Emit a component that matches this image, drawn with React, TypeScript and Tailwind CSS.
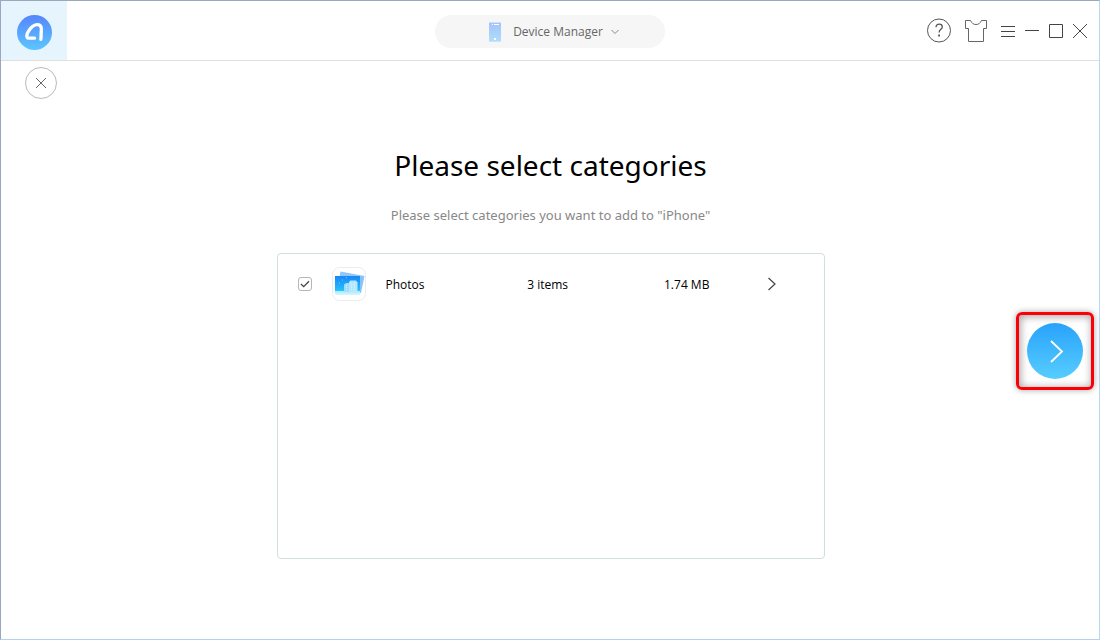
import { useState } from "react";

interface Category {
  id: string;
  name: string;
  items: string;
  size: string;
}

const categories: Category[] = [
  { id: "photos", name: "Photos", items: "3 items", size: "1.74 MB" },
];

function Logo() {
  return (
    <svg className="size-9" viewBox="0 0 36 36" aria-hidden="true">
      <defs>
        <linearGradient id="logo-fill" x1="0" y1="0" x2="0" y2="1">
          <stop offset="0" stopColor="#5585fd" />
          <stop offset="1" stopColor="#5cc6ff" />
        </linearGradient>
      </defs>
      <circle cx="18.5" cy="18.5" r="17.5" fill="url(#logo-fill)" />
      <path
        d="M18.500 24.200H12.500C10 24.200 10.500 20 13 16.500 15.500 12.500 18.500 10.600 21.500 10.600 26 10.600 25.500 15.500 25.200 18.500 25 21 25.300 23 24.800 25.300"
        fill="none"
        stroke="#fff"
        strokeWidth="3.300"
        strokeLinecap="round"
        strokeLinejoin="round"
      />
    </svg>
  );
}

function PhoneIcon() {
  return (
    <svg className="h-5 w-3" viewBox="0 0 12 20" aria-hidden="true">
      <defs>
        <linearGradient id="phone-fill" x1="0" y1="0" x2="0" y2="1">
          <stop offset="0" stopColor="#a6c0fb" />
          <stop offset="1" stopColor="#aee0fb" />
        </linearGradient>
      </defs>
      <rect width="12" height="20" rx="1" fill="url(#phone-fill)" />
      <path d="M0 .5h12M0 19.500h12" stroke="#cfe0fb" />
      <path d="M3 2.500h1M5 2.500h5" stroke="#fff" />
      <rect x="5" y="16" width="2" height="2" fill="#fff" />
    </svg>
  );
}

function PhotosIcon() {
  return (
    <svg className="size-[34px]" viewBox="0 0 34 34" aria-hidden="true">
      <defs>
        <linearGradient id="photo-fill" x1="0" y1="0" x2="0" y2="1">
          <stop offset="0" stopColor="#1787f6" />
          <stop offset="0.76" stopColor="#25c0fc" />
          <stop offset="0.8" stopColor="#a8ebfd" />
          <stop offset="1" stopColor="#d8f7fe" />
        </linearGradient>
      </defs>
      <rect x="0.5" y="0.5" width="33" height="33" rx="7" fill="#fff" stroke="#eaecef" />
      <path d="M8.500 4.500 32.500 9 29 26 5 22z" fill="#90c6f9" />
      <path d="M3 9h25v19H4.500L3 26.500z" fill="url(#photo-fill)" />
      <path d="M28 9.500 32 10l-4 16z" fill="#86c3f9" />
      <path d="M12 17.500l2-1.500h3v8.500h-5z" fill="#9ddcfc" />
      <path d="M17 15l1.500-1.500H24l1.500 2v9H17z" fill="#b7e6fd" />
      <path d="M14.500 18v6M19.500 16v8M22.500 16v8" stroke="#d4f1fe" strokeDasharray="1 1" />
      <path d="M10 13h1M7 16h1M14 10.500h1" stroke="#78bffb" />
    </svg>
  );
}

function Header() {
  return (
    <header className="grid h-[60px] grid-cols-[1fr_auto_1fr] items-center border-b border-[#dfdfdf]">
      <a href="#home" aria-label="Home" className="flex h-full w-[66px] items-center justify-center bg-[#e6f4fe] pt-[2px]">
        <Logo />
      </a>

      <button type="button" className="mt-[2px] flex h-[33px] w-[230px] items-center justify-center rounded-full bg-[#f6f6f6] pl-2 text-xs text-[#666]">
        <PhoneIcon />
        <span className="mr-2 ml-3">Device Manager</span>
        <svg className="h-2 w-2" viewBox="0 0 8 8" fill="none" stroke="#888" aria-hidden="true">
          <path d="M.5 2 4 5.500 7.500 2" />
        </svg>
      </button>

      <div className="flex items-center justify-end gap-2 pr-[11px]">
        <button type="button" aria-label="Help" className="mr-1">
          <svg className="size-[26px]" viewBox="0 0 26 26" fill="none" stroke="#555" aria-hidden="true">
            <circle cx="13" cy="12.500" r="11.500" />
            <path d="M10 9.300C10 7.200 11.300 6.100 13.100 6.100s3.200 1 3.200 2.800c0 2.400-3.200 2.500-3.200 5.500" strokeWidth="1.300" />
            <path d="M12.200 16.500h1.800v1.900h-1.800z" fill="#555" stroke="none" />
          </svg>
        </button>
        <button type="button" aria-label="Skins" className="mr-1">
          <svg className="h-6 w-6" viewBox="0 0 24 24" fill="none" stroke="#666" aria-hidden="true">
            <path d="M1.500 1.500H6.500C8 4.500 9.500 5.500 12 5.500s4-1 5.500-4h5V9.500h-3V22.500H4.500V9.500h-3z" />
          </svg>
        </button>
        <button type="button" aria-label="Menu">
          <svg className="h-4 w-4" viewBox="0 0 16 16" stroke="#444" aria-hidden="true">
            <path d="M1 3.500h14M1 8.500h14M1 13.500h14" />
          </svg>
        </button>
        <button type="button" aria-label="Minimize">
          <svg className="h-4 w-4" viewBox="0 0 16 16" stroke="#444" aria-hidden="true">
            <path d="M1 7.500h14" />
          </svg>
        </button>
        <button type="button" aria-label="Maximize">
          <svg className="h-4 w-4" viewBox="0 0 16 16" fill="none" stroke="#444" aria-hidden="true">
            <path d="M1.500 1.500h13v13h-13z" />
          </svg>
        </button>
        <button type="button" aria-label="Close">
          <svg className="h-4 w-4" viewBox="0 0 16 16" stroke="#444" aria-hidden="true">
            <path d="M1 1l14 14M15 1 1 15" />
          </svg>
        </button>
      </div>
    </header>
  );
}

interface CategoryRowProps {
  category: Category;
  checked: boolean;
  onToggle: () => void;
}

function CategoryRow({ category, checked, onToggle }: CategoryRowProps) {
  return (
    <li className="grid h-[60px] grid-cols-[auto_auto_13fr_11fr_8fr_auto] items-center pr-11 pl-5 text-xs text-black">
      <span className="grid size-[14px]">
        <input
          id={category.id}
          type="checkbox"
          checked={checked}
          onChange={onToggle}
          className="peer col-start-1 row-start-1 size-[14px] appearance-none rounded-[3px] border border-[#b5b5bb] bg-white"
        />
        <svg
          className="pointer-events-none invisible col-start-1 row-start-1 size-[14px] peer-checked:visible"
          viewBox="0 0 14 14"
          fill="none"
          stroke="#444"
          strokeWidth="1.300"
          aria-hidden="true"
        >
          <path d="M3 7l2.700 2.700L11 4.300" />
        </svg>
      </span>
      <span className="pl-5">
        <PhotosIcon />
      </span>
      <label htmlFor={category.id} className="pt-[2px] pl-5">{category.name}</label>
      <span className="pt-[2px]">{category.items}</span>
      <span className="pt-[2px]">{category.size}</span>
      <button type="button" aria-label={`Open ${category.name}`}>
        <svg className="h-4 w-4" viewBox="0 0 16 16" fill="none" stroke="#444" strokeWidth="1.200" aria-hidden="true">
          <path d="M4.500 2 11 8l-6.500 6" />
        </svg>
      </button>
    </li>
  );
}

export default function App() {
  const [selected, setSelected] = useState<string[]>(["photos"]);

  const toggle = (id: string) => {
    setSelected((prev) => (prev.includes(id) ? prev.filter((x) => x !== id) : [...prev, id]));
  };

  return (
    <div className="flex min-h-screen flex-col border border-t-[#98a8bd] border-r-[#b9d6f5] border-b-[#b5d0f0] border-l-[#98a8c4] bg-white font-['Open_Sans','Noto_Sans',sans-serif]">
      <Header />
      <main className="grid flex-1 grid-cols-[1fr_2fr_1fr]">
        <div className="pt-[6px] pl-6">
          <button
            type="button"
            aria-label="Back"
            className="flex size-8 items-center justify-center rounded-full border border-[#bbb]"
          >
            <svg className="size-3" viewBox="0 0 12 12" stroke="#666" aria-hidden="true">
              <path d="M1 1l10 10M11 1 1 11" />
            </svg>
          </button>
        </div>

        <section className="flex flex-col pt-20 pb-20 pl-px">
          <h1 className="text-center font-['Noto_Sans','Open_Sans',sans-serif] text-[28px] leading-[48px] text-black">
            Please select categories
          </h1>
          <p className="mt-4 text-center font-['Noto_Sans','Open_Sans',sans-serif] text-[13px] leading-5 text-[#888]">
            Please select categories you want to add to "iPhone"
          </p>
          <ul className="mt-7 flex-1 rounded-[4px] border border-[#cfe0df]">
            {categories.map((category) => (
              <CategoryRow
                key={category.id}
                category={category}
                checked={selected.includes(category.id)}
                onToggle={() => toggle(category.id)}
              />
            ))}
          </ul>
        </section>

        <div className="flex items-center justify-end pt-[2px] pr-[5px]">
          <div className="rounded-[6px] border-3 border-[#fb0006] p-2 shadow-[0_0_6px_rgba(0,0,0,0.35),inset_1px_1px_8px_rgba(0,0,0,0.4)]">
            <button
              type="button"
              aria-label="Next"
              className="flex size-14 items-center justify-center rounded-full bg-linear-to-b from-[#28a2fb] to-[#56cdfe]"
            >
              <svg className="size-6" viewBox="0 0 24 24" fill="none" stroke="#fff" strokeWidth="1.800" aria-hidden="true">
                <path d="M8 2l11 10.500L8 23" />
              </svg>
            </button>
          </div>
        </div>
      </main>
    </div>
  );
}
